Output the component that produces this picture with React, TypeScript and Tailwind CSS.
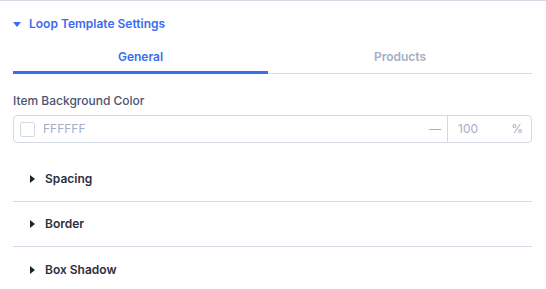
import { useState } from 'react';
import clsx from 'clsx';

// Petit triangle plein (vers le bas ou vers la droite)
function Caret({ dir }: { dir: 'down' | 'right' }) {
  if (dir === 'down') {
    return (
      <svg width="8" height="5" viewBox="0 0 8 5" className="shrink-0">
        <path d="M0 0 L8 0 L4 5 Z" fill="currentColor" />
      </svg>
    );
  }
  return (
    <svg width="5" height="8" viewBox="0 0 5 8" className="shrink-0">
      <path d="M0 0 L5 4 L0 8 Z" fill="currentColor" />
    </svg>
  );
}

function SectionRow({ label, last }: { label: string; last?: boolean }) {
  return (
    <div
      className={clsx(
        'flex h-[45px] items-center gap-[10px] pl-[17px] text-[#1f2330]',
        !last && 'border-b border-[#d5d9e3]'
      )}
    >
      <Caret dir="right" />
      <span className="text-[12px] font-semibold text-[#2b2f3d]">{label}</span>
    </div>
  );
}

export default function App() {
  const [tab, setTab] = useState<'general' | 'products'>('general');

  return (
    <div
      className="h-[289px] w-[546px] overflow-hidden border-t border-[#d5d9e3] bg-white pl-[13px] pr-[14px]"
      style={{ fontFamily: 'Inter, "Noto Sans", sans-serif' }}
    >
      {/* En-tête */}
      <div className="flex items-center gap-[8px] pt-[15px] text-[#3b6cf2]">
        <Caret dir="down" />
        <span className="text-[12px] font-semibold leading-[16px]">Loop Template Settings</span>
      </div>

      {/* Onglets */}
      <div className="mt-[17px] flex border-b border-[#d5d9e3]">
        <button
          onClick={() => setTab('general')}
          className={clsx(
            'mb-[-1px] h-[25px] w-[255px] border-b-[3px] pb-[6px] text-[12px] font-semibold leading-[16px]',
            tab === 'general' ? 'border-[#3b6cf2] text-[#3b6cf2]' : 'border-transparent text-[#a5aec6]'
          )}
        >
          General
        </button>
        <button
          onClick={() => setTab('products')}
          className={clsx(
            'mb-[-1px] h-[25px] flex-1 border-b-[3px] pb-[6px] text-[12px] font-semibold leading-[16px]',
            tab === 'products' ? 'border-[#3b6cf2] text-[#3b6cf2]' : 'border-transparent text-[#a5aec6]'
          )}
        >
          Products
        </button>
      </div>

      {/* Couleur de fond */}
      <p className="mt-[19px] text-[12px] font-medium leading-[16px] text-[#4a5475]">Item Background Color</p>
      <div className="mt-[6px] flex h-[28px] items-center rounded-[4px] border border-[#d5d9e3]">
        <div className="ml-[6px] h-[15px] w-[15px] rounded-[2px] border border-[#d5d9e3] bg-white" />
        <span className="ml-[8px] flex-1 text-[12px] text-[#a5aec6]">FFFFFF</span>
        <span className="mr-[6px] text-[12px] text-[#a5aec6]">—</span>
        <div className="flex h-full w-[84px] items-center justify-between border-l border-[#d5d9e3] pl-[10px] pr-[8px] text-[12px] text-[#a5aec6]">
          <span>100</span>
          <span>%</span>
        </div>
      </div>

      {/* Sections repliables */}
      <div className="mt-[14px]">
        <SectionRow label="Spacing" />
        <SectionRow label="Border" />
        <SectionRow label="Box Shadow" last />
      </div>
    </div>
  );
}
